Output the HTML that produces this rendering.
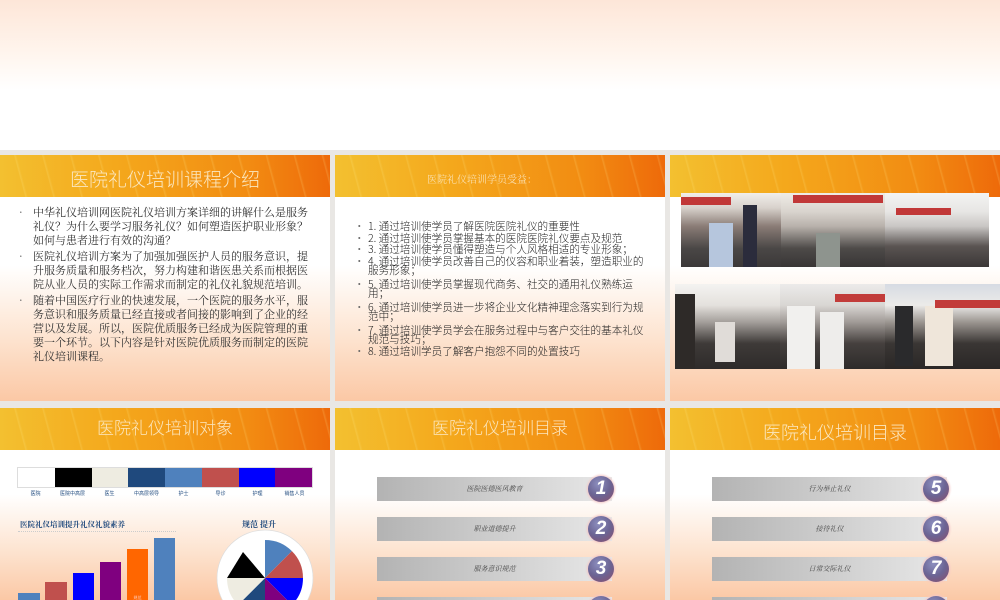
<!DOCTYPE html>
<html><head><meta charset="utf-8"><style>
*{margin:0;padding:0;box-sizing:border-box}
body{width:1000px;height:600px;overflow:hidden;background:#e9e7e4;position:relative;font-family:"Liberation Serif","Noto Serif CJK SC","Noto Sans CJK SC",serif}
.top{position:absolute;left:0;top:0;width:1000px;height:150px;background:linear-gradient(#fde6d8 0,#fff4ec 50px,#fff 90px,#fff 150px)}
.p{position:absolute;overflow:hidden;background:linear-gradient(#fff 0,#fff 45%,#fde3cf 75%,#fbc8a5 100%)}
.h{position:absolute;left:0;top:0;width:100%;height:42px;background:linear-gradient(90deg,#f3c030 0%,#f4a81c 35%,#f28c12 75%,#ee6a0a 100%);color:#fbe7c0;text-align:center;font-family:"Noto Sans CJK SC",sans-serif;font-weight:300}
.h:before{content:"";position:absolute;inset:0;background:repeating-linear-gradient(75deg,rgba(255,240,150,0) 0 24px,rgba(255,240,150,.18) 25px,rgba(255,240,150,0) 27px);}
.h span{position:relative}
.txt{position:absolute;font-size:11px;line-height:14px;color:#333;font-family:"Noto Serif CJK SC",serif}
.li{position:relative;padding-left:0}
.li:before{content:"·";position:absolute;left:-14px;color:#666}
.bar{position:absolute;height:24px;background:linear-gradient(90deg,#b3b3b3,#e8e8e8);font-size:7px;font-style:italic;color:#444;text-align:center;line-height:24px;font-family:"Noto Serif CJK SC",serif}
.num{position:absolute;width:26px;height:26px;border-radius:50%;background:radial-gradient(circle at 40% 30%,#8d8fbf,#6b6494 50%,#8b4d6a 100%);box-shadow:0 0 2px 1px #f4c6c6;color:#fff;font:italic bold 19px "Liberation Sans",sans-serif;text-align:center;line-height:26px}
.ph{position:absolute;overflow:hidden}
</style></head><body>
<div class="top"></div>

<!-- Slide 1 -->
<div class="p" style="left:0;top:155px;width:330px;height:246px">
<div class="h" style="font-size:19px;line-height:48px"><span>医院礼仪培训课程介绍</span></div>
<div class="txt" style="left:33px;top:50px;width:278px">
<div class="li">中华礼仪培训网医院礼仪培训方案详细的讲解什么是服务礼仪？为什么要学习服务礼仪？如何塑造医护职业形象？如何与患者进行有效的沟通？</div>
<div class="li" style="margin-top:2px">医院礼仪培训方案为了加强加强医护人员的服务意识，提升服务质量和服务档次，努力构建和谐医患关系而根据医院从业人员的实际工作需求而制定的礼仪礼貌规范培训。</div>
<div class="li" style="margin-top:2px">随着中国医疗行业的快速发展，一个医院的服务水平，服务意识和服务质量已经直接或者间接的影响到了企业的经营以及发展。所以，医院优质服务已经成为医院管理的重要一个环节。以下内容是针对医院优质服务而制定的医院礼仪培训课程。</div>
</div></div>

<!-- Slide 2 -->
<div class="p" style="left:335px;top:155px;width:330px;height:246px">
<div class="h" style="font-size:10px;line-height:48px;text-align:left;padding-left:92px;font-family:'Noto Serif CJK SC',serif"><span>医院礼仪培训学员受益：</span></div>
<div class="txt" style="left:33px;top:65px;width:278px;font-size:10.6px;line-height:9.5px;font-family:'Noto Sans CJK SC',sans-serif;font-weight:300;color:#222">
<div class="li" style="margin-top:2px">1. 通过培训使学员了解医院医院礼仪的重要性</div>
<div class="li" style="margin-top:2px">2. 通过培训使学员掌握基本的医院医院礼仪要点及规范</div>
<div class="li" style="margin-top:2px">3. 通过培训使学员懂得塑造与个人风格相适的专业形象；</div>
<div class="li" style="margin-top:2px">4. 通过培训使学员改善自己的仪容和职业着装，塑造职业的服务形象；</div>
<div class="li" style="margin-top:4px">5. 通过培训使学员掌握现代商务、社交的通用礼仪熟练运用；</div>
<div class="li" style="margin-top:4px">6. 通过培训使学员进一步将企业文化精神理念落实到行为规范中；</div>
<div class="li" style="margin-top:4px">7. 通过培训使学员学会在服务过程中与客户交往的基本礼仪规范与技巧；</div>
<div class="li" style="margin-top:2px">8. 通过培训学员了解客户抱怨不同的处置技巧</div>
</div></div>

<!-- Slide 3 -->
<div class="p" style="left:670px;top:155px;width:330px;height:246px">
<div class="h"></div>
<div class="ph" style="left:11px;top:38px;width:308px;height:74px;background:#fff">
 <div style="position:absolute;left:0;top:0;width:100px;height:74px;background:linear-gradient(#f1eeea 0,#d8d2cc 20%,#8a7c76 45%,#4a4746 75%,#3b3838 100%)"></div>
 <div style="position:absolute;left:100px;top:0;width:104px;height:74px;background:linear-gradient(#efece6 0,#d9d4ce 25%,#b8b1ab 45%,#4d4a48 75%,#383535 100%)"></div>
 <div style="position:absolute;left:204px;top:0;width:104px;height:74px;background:linear-gradient(#f3f3f2 0,#e7e6e4 25%,#c9c6c4 45%,#5a5452 72%,#3b3737 100%)"></div>
 <div style="position:absolute;left:0;top:4px;width:50px;height:8px;background:#c13838"></div>
 <div style="position:absolute;left:112px;top:2px;width:90px;height:8px;background:#c13838"></div>
 <div style="position:absolute;left:215px;top:15px;width:55px;height:7px;background:#c13838"></div>
 <div style="position:absolute;left:62px;top:12px;width:14px;height:62px;background:#2b2c3c"></div>
 <div style="position:absolute;left:28px;top:30px;width:24px;height:44px;background:#b6c6dd"></div>
 <div style="position:absolute;left:135px;top:40px;width:24px;height:34px;background:#8e948e"></div>
</div>
<div class="ph" style="left:5px;top:129px;width:325px;height:85px;background:#fff">
 <div style="position:absolute;left:0;top:0;width:105px;height:85px;background:linear-gradient(#f4f3f1 0,#e4e1dd 25%,#a39e9a 45%,#3e3a38 70%,#2e2b2a 100%)"></div>
 <div style="position:absolute;left:105px;top:0;width:105px;height:85px;background:linear-gradient(#ecebea 0,#d9d6d3 25%,#a09a96 45%,#45403e 70%,#2e2b2a 100%)"></div>
 <div style="position:absolute;left:210px;top:0;width:115px;height:85px;background:linear-gradient(#d6dbe3 0,#ecebe9 25%,#9b9590 45%,#3a3634 70%,#2a2726 100%)"></div>
 <div style="position:absolute;left:0;top:10px;width:20px;height:75px;background:#2e2a28"></div>
 <div style="position:absolute;left:40px;top:38px;width:20px;height:40px;background:#e0dcd8"></div>
 <div style="position:absolute;left:112px;top:22px;width:28px;height:63px;background:#f1f0ee"></div>
 <div style="position:absolute;left:145px;top:28px;width:24px;height:57px;background:#eeedeb"></div>
 <div style="position:absolute;left:160px;top:10px;width:50px;height:8px;background:#c23c3a"></div>
 <div style="position:absolute;left:250px;top:22px;width:28px;height:60px;background:#efe6da"></div>
 <div style="position:absolute;left:220px;top:22px;width:18px;height:60px;background:#2a2a2c"></div>
 <div style="position:absolute;left:260px;top:16px;width:65px;height:8px;background:#c23c3a"></div>
</div>
</div>

<!-- Slide 4 -->
<div class="p" style="left:0;top:408px;width:330px;height:192px">
<div class="h" style="font-size:17px;line-height:38px"><span>医院礼仪培训对象</span></div>
<div style="position:absolute;left:17px;top:59px;width:296px;height:21px;display:flex;border:1px solid #ddd">
<div style="flex:1;background:#fff"></div><div style="flex:1;background:#000"></div><div style="flex:1;background:#eeece1"></div><div style="flex:1;background:#1f497d"></div><div style="flex:1;background:#4f81bd"></div><div style="flex:1;background:#c0504d"></div><div style="flex:1;background:#0000ff"></div><div style="flex:1;background:#7f007f"></div>
</div>
<div style="position:absolute;left:17px;top:82px;width:296px;display:flex;font-size:5px;color:#1f497d;text-align:center;font-family:'Noto Sans CJK SC',sans-serif">
<div style="flex:1">医院</div><div style="flex:1">医院中高层</div><div style="flex:1">医生</div><div style="flex:1">中高层领导</div><div style="flex:1">护士</div><div style="flex:1">导诊</div><div style="flex:1">护理</div><div style="flex:1">销售人员</div>
</div>
<div style="position:absolute;left:20px;top:111px;font-size:7.5px;color:#1f497d;font-weight:bold">医院礼仪培训提升礼仪礼貌素养</div>
<div style="position:absolute;left:18px;top:123px;width:158px;border-top:1px dotted #ccc"></div>
<div style="position:absolute;left:18px;top:185px;width:22px;height:10px;background:#4f81bd"></div>
<div style="position:absolute;left:45px;top:174px;width:22px;height:20px;background:#c0504d"></div>
<div style="position:absolute;left:73px;top:165px;width:21px;height:30px;background:#0000ff"></div>
<div style="position:absolute;left:100px;top:154px;width:21px;height:40px;background:#7f007f"></div>
<div style="position:absolute;left:127px;top:141px;width:21px;height:55px;background:#ff6600;color:#fdd;font-size:4px;text-align:center;padding-top:46px">规范</div>
<div style="position:absolute;left:154px;top:130px;width:21px;height:65px;background:#4f81bd"></div>
<div style="position:absolute;left:242px;top:111px;font-size:8px;color:#1f497d;font-weight:bold">规范 提升</div>
<svg style="position:absolute;left:215px;top:120px" width="100" height="100" viewBox="-50 -50 100 100">
<circle r="48" fill="#fff" stroke="#ddd" stroke-width="0.7"/>
<path d="M0 0V-38A38 38 0 0 1 26.9 -26.9Z" fill="#4f81bd"/>
<path d="M0 0L26.9 -26.9A38 38 0 0 1 38 0Z" fill="#c0504d"/>
<path d="M0 0H38A38 38 0 0 1 26.9 26.9Z" fill="#0000ff"/>
<path d="M0 0L26.9 26.9A38 38 0 0 1 0 38Z" fill="#7f007f"/>
<path d="M0 0V38A38 38 0 0 1 -26.9 26.9Z" fill="#1f497d"/>
<path d="M0 0L-26.9 26.9A38 38 0 0 1 -38 0Z" fill="#eeece1"/>
<path d="M0 0H-38L-22 -26Z" fill="#000"/>
</svg>
</div>

<!-- Slide 5 -->
<div class="p" style="left:335px;top:408px;width:330px;height:192px">
<div class="h" style="font-size:17px;line-height:38px"><span>医院礼仪培训目录</span></div>
<div class="bar" style="left:42px;top:69px;width:235px">医院医德医风教育</div>
<div class="bar" style="left:42px;top:109px;width:235px">职业道德提升</div>
<div class="bar" style="left:42px;top:149px;width:235px">服务意识规范</div>
<div class="bar" style="left:42px;top:189px;width:235px"></div>
<div class="num" style="left:253px;top:68px">1</div>
<div class="num" style="left:253px;top:108px">2</div>
<div class="num" style="left:253px;top:148px">3</div>
<div class="num" style="left:253px;top:188px">4</div>
</div>

<!-- Slide 6 -->
<div class="p" style="left:670px;top:408px;width:330px;height:192px">
<div class="h" style="font-size:18px;line-height:48px"><span>医院礼仪培训目录</span></div>
<div class="bar" style="left:42px;top:69px;width:235px">行为举止礼仪</div>
<div class="bar" style="left:42px;top:109px;width:235px">接待礼仪</div>
<div class="bar" style="left:42px;top:149px;width:235px">日常交际礼仪</div>
<div class="bar" style="left:42px;top:189px;width:235px"></div>
<div class="num" style="left:253px;top:68px">5</div>
<div class="num" style="left:253px;top:108px">6</div>
<div class="num" style="left:253px;top:148px">7</div>
<div class="num" style="left:253px;top:188px">8</div>
</div>
</body></html>
